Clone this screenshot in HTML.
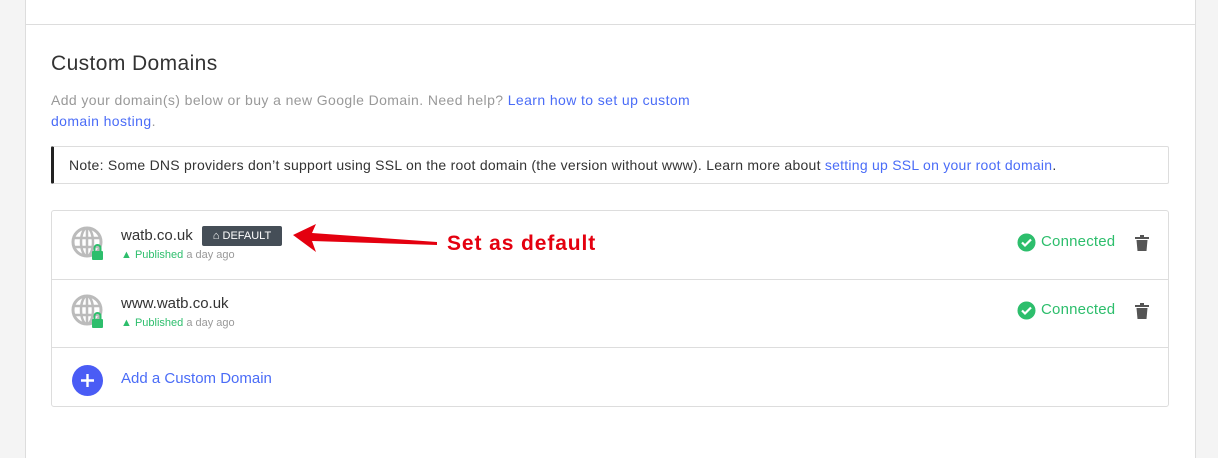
<!DOCTYPE html>
<html><head><style>
body{margin:0;width:1218px;height:441px;background:#f4f4f4;font-family:"Liberation Sans",sans-serif;overflow:hidden;position:relative}
.panel{position:absolute;left:25px;top:-2px;width:1169px;height:460px;background:#fff;border-left:1px solid #ddd;border-right:1px solid #ddd}
.hr{position:absolute;left:0;right:0;top:26px;border-top:1px solid #ddd}
.abs{position:absolute;white-space:nowrap}
a{color:#4a6cf7;text-decoration:none}
.note{position:absolute;left:25px;top:148px;width:1118px;height:38px;border:1px solid #ddd;border-left:3px solid #222;border-radius:2px;font-size:14px;letter-spacing:0.25px;color:#333;line-height:36px;padding-left:15px;box-sizing:border-box}
.list{position:absolute;left:25px;top:212px;width:1116px;height:195px;border:1px solid #ddd;border-radius:3px}
.row{position:absolute;left:0;right:0;height:68px;border-bottom:1px solid #ddd}
.dom{position:absolute;left:69px;top:16px;font-size:15px;color:#333}
.pub{position:absolute;left:69px;top:38px;font-size:11px;color:#2dbe6c}
.pub span{color:#999}
.con{position:absolute;left:966px;top:22px;font-size:15px;color:#2dbe6c;letter-spacing:0.2px}
</style></head><body>
<div class="panel">
<div class="hr"></div>
<div class="abs" style="left:25px;top:54px;font-size:21px;letter-spacing:0.4px;color:#333">Custom Domains</div>
<div class="abs" style="left:25px;top:92px;font-size:14px;letter-spacing:0.4px;color:#999;line-height:21px">Add your domain(s) below or buy a new Google Domain. Need help? <a>Learn how to set up custom</a><br><a>domain hosting</a>.</div>
<div class="note">Note: Some DNS providers don’t support using SSL on the root domain (the version without www). Learn more about <a>setting up SSL on your root domain</a>.</div>
<div class="list">
<div class="row" style="top:0">
<svg class="abs" style="left:19px;top:14px" width="36" height="36" viewBox="0 0 36 36"><circle cx="16" cy="17" r="14" fill="none" stroke="#bbb" stroke-width="3"/><ellipse cx="16" cy="17" rx="6" ry="14" fill="none" stroke="#bbb" stroke-width="2.5"/><line x1="2" y1="13" x2="30" y2="13" stroke="#bbb" stroke-width="2.5"/><line x1="3" y1="22" x2="29" y2="22" stroke="#bbb" stroke-width="2.5"/><line x1="16" y1="3" x2="16" y2="31" stroke="#bbb" stroke-width="2.5"/><rect x="21" y="26" width="11" height="9" rx="1" fill="#2dbe6c"/><path d="M23.5 26v-3a3 3 0 0 1 6 0v3" fill="none" stroke="#2dbe6c" stroke-width="2"/></svg>
<div class="dom">watb.co.uk</div>
<div class="abs" style="left:150px;top:15px;width:80px;height:20px;background:#454e57;border-radius:2px;color:#fff;font-size:11px;line-height:20px;text-align:center">&#8962; DEFAULT</div>
<div class="pub">&#9650; Published <span>a day ago</span></div>
<svg class="abs" style="left:965px;top:22px" width="19" height="19"><circle cx="9.5" cy="9.5" r="9" fill="#2dbe6c"/><path d="M5 9.5l3 3 6-6" stroke="#fff" stroke-width="2.2" fill="none"/></svg>
<div class="con" style="left:989px">Connected</div>
<svg class="abs" style="left:1083px;top:24px" width="14" height="16"><rect x="0" y="2" width="14" height="2" fill="#555"/><rect x="5" y="0" width="4" height="2" fill="#555"/><path d="M1.5 5h11l-1 11h-9z" fill="#555"/></svg>
</div>
<div class="row" style="top:68px">
<svg class="abs" style="left:19px;top:14px" width="36" height="36" viewBox="0 0 36 36"><circle cx="16" cy="17" r="14" fill="none" stroke="#bbb" stroke-width="3"/><ellipse cx="16" cy="17" rx="6" ry="14" fill="none" stroke="#bbb" stroke-width="2.5"/><line x1="2" y1="13" x2="30" y2="13" stroke="#bbb" stroke-width="2.5"/><line x1="3" y1="22" x2="29" y2="22" stroke="#bbb" stroke-width="2.5"/><line x1="16" y1="3" x2="16" y2="31" stroke="#bbb" stroke-width="2.5"/><rect x="21" y="26" width="11" height="9" rx="1" fill="#2dbe6c"/><path d="M23.5 26v-3a3 3 0 0 1 6 0v3" fill="none" stroke="#2dbe6c" stroke-width="2"/></svg>
<div class="dom">www.watb.co.uk</div>
<div class="pub">&#9650; Published <span>a day ago</span></div>
<svg class="abs" style="left:965px;top:22px" width="19" height="19"><circle cx="9.5" cy="9.5" r="9" fill="#2dbe6c"/><path d="M5 9.5l3 3 6-6" stroke="#fff" stroke-width="2.2" fill="none"/></svg>
<div class="con" style="left:989px">Connected</div>
<svg class="abs" style="left:1083px;top:24px" width="14" height="16"><rect x="0" y="2" width="14" height="2" fill="#555"/><rect x="5" y="0" width="4" height="2" fill="#555"/><path d="M1.5 5h11l-1 11h-9z" fill="#555"/></svg>
</div>
<div class="row" style="top:136px;border-bottom:none">
<svg class="abs" style="left:20px;top:18px" width="31" height="31"><circle cx="15.5" cy="15.5" r="15.5" fill="#4a5cf5"/><path d="M15.5 9v13M9 15.5h13" stroke="#fff" stroke-width="2.4"/></svg>
<div class="abs" style="left:69px;top:23px;font-size:15px;color:#4a6cf7">Add a Custom Domain</div>
</div>
</div>
</div>
<svg class="abs" style="left:290px;top:222px" width="150" height="32"><path d="M3 13L26 2 22 11 147 20 147 23 22 19 26 30z" fill="#e4000f"/></svg>
<div class="abs" style="left:447px;top:232px;font-size:21px;letter-spacing:0.9px;font-weight:bold;color:#e4000f">Set as default</div>
</body></html>
